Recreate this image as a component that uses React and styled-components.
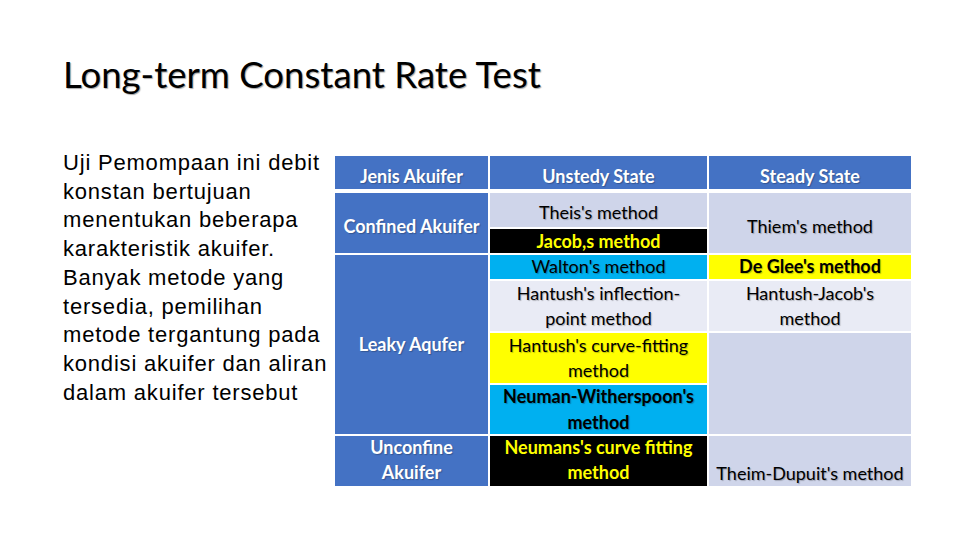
import styled, { createGlobalStyle } from "styled-components";

const GlobalStyle = createGlobalStyle`
  html, body {
    margin: 0;
    padding: 0;
    background: #ffffff;
  }
`;

const Slide = styled.div`
  width: 960px;
  height: 540px;
  box-sizing: border-box;
  padding: 50px 0 0 63px;
  background: #ffffff;
  overflow: hidden;
`;

const Title = styled.h1`
  margin: 0;
  font-family: Lato, "Open Sans", sans-serif;
  font-weight: 400;
  font-size: 36.6px;
  line-height: 48px;
  color: #000000;
  text-shadow: 1px 1px 1px rgba(0, 0, 0, 0.35);
`;

const Content = styled.div`
  display: flex;
  align-items: flex-start;
  margin-top: 51px;
`;

const Intro = styled.p`
  margin: 0;
  width: 272px;
  font-family: "Liberation Sans", Arial, sans-serif;
  font-size: 22px;
  line-height: 28.7px;
  letter-spacing: 0.8px;
  white-space: nowrap;
  color: #000000;
`;

const Table = styled.div`
  display: grid;
  grid-template-columns: 153px 217px 202px;
  grid-template-rows: 35px 34px 24px 24px 50px 50px 49px 50px;
  gap: 2px;
  margin-top: 7px;
  background: #ffffff;
  font-family: Lato, "Open Sans", sans-serif;
  font-size: 18px;
  line-height: 25.5px;
  text-shadow: 1px 1px 1px rgba(0, 0, 0, 0.25);
`;

const Cell = styled.div`
  grid-row: ${({ $row }) => $row};
  grid-column: ${({ $col }) => $col};
  display: flex;
  align-items: ${({ $valign }) => $valign || "center"};
  justify-content: center;
  text-align: center;
  white-space: nowrap;
  background: ${({ $bg }) => $bg || "#cfd5ea"};
  color: ${({ $color }) => $color || "#000000"};
  font-weight: ${({ $bold }) => ($bold ? 700 : 400)};
  padding: 0 2px;
  margin-bottom: ${({ $head }) => ($head ? "2px" : "0")};
`;

const CellText = styled.span`
  position: relative;
  top: ${({ $shift }) => $shift || 0}px;
`;

const BLUE = "#4472c4";
const LIGHT = "#cfd5ea";
const LIGHTER = "#e9ebf5";
const CYAN = "#00b0f0";
const YELLOW = "#ffff00";
const BLACK = "#000000";

const cells = [
  { row: "1", col: "1", bg: BLUE, color: "#fff", bold: true, head: true, shift: 4, text: "Jenis Akuifer" },
  { row: "1", col: "2", bg: BLUE, color: "#fff", bold: true, head: true, shift: 4, text: "Unstedy State" },
  { row: "1", col: "3", bg: BLUE, color: "#fff", bold: true, head: true, shift: 4, text: "Steady State" },

  { row: "2 / 4", col: "1", bg: BLUE, color: "#fff", bold: true, shift: 4, text: "Confined Akuifer" },
  { row: "2", col: "2", bg: LIGHT, shift: 3, text: "Theis's method" },
  { row: "3", col: "2", bg: BLACK, color: YELLOW, bold: true, shift: 1, text: "Jacob,s method" },
  { row: "2 / 4", col: "3", bg: LIGHT, shift: 4, text: "Thiem's method" },

  { row: "4 / 8", col: "1", bg: BLUE, color: "#fff", bold: true, text: "Leaky Aqufer" },
  { row: "4", col: "2", bg: CYAN, text: "Walton's method" },
  { row: "5", col: "2", bg: LIGHTER, text: <>Hantush's inflection-<br />point method</> },
  { row: "6", col: "2", bg: YELLOW, text: <>Hantush's curve-fitting<br />method</> },
  { row: "7", col: "2", bg: CYAN, bold: true, text: <>Neuman-Witherspoon's<br />method</> },
  { row: "4", col: "3", bg: YELLOW, bold: true, text: "De Glee's method" },
  { row: "5", col: "3", bg: LIGHTER, text: <>Hantush-Jacob's<br />method</> },
  { row: "6 / 8", col: "3", bg: LIGHT, text: "" },

  { row: "8", col: "1", bg: BLUE, color: "#fff", bold: true, shift: -1, text: <>Unconfine<br />Akuifer</> },
  { row: "8", col: "2", bg: BLACK, color: YELLOW, bold: true, shift: -1, text: <>Neumans's curve fitting<br />method</> },
  { row: "8", col: "3", bg: LIGHT, valign: "flex-end", text: "Theim-Dupuit's method" },
];

const introLines = [
  "Uji Pemompaan ini debit",
  "konstan bertujuan",
  "menentukan beberapa",
  "karakteristik akuifer.",
  "Banyak metode yang",
  "tersedia, pemilihan",
  "metode tergantung pada",
  "kondisi akuifer dan aliran",
  "dalam akuifer tersebut",
];

export default function App() {
  return (
    <>
      <GlobalStyle />
      <Slide>
        <Title>Long-term Constant Rate Test</Title>
        <Content>
          <Intro>
            {introLines.map((line, i) => (
              <span key={i}>
                {line}
                {i < introLines.length - 1 && <br />}
              </span>
            ))}
          </Intro>
          <Table>
            {cells.map((c, i) => (
              <Cell
                key={i}
                $row={c.row}
                $col={c.col}
                $bg={c.bg}
                $color={c.color}
                $bold={c.bold}
                $head={c.head}
                $valign={c.valign}
              >
                <CellText $shift={c.shift}>{c.text}</CellText>
              </Cell>
            ))}
          </Table>
        </Content>
      </Slide>
    </>
  );
}
